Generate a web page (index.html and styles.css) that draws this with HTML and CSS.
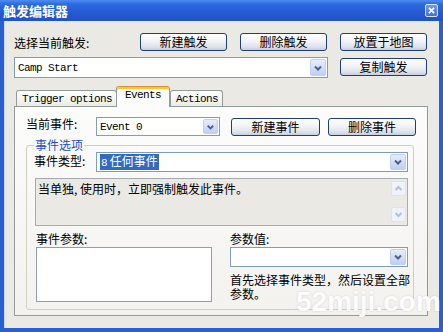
FILE: index.html
```html
<!DOCTYPE html>
<html lang="zh-CN">
<head>
<meta charset="UTF-8">
<title>触发编辑器</title>
<link rel="stylesheet" href="styles.css">
</head>
<body>

<div class="window">
  <!-- TITLE BAR -->
  <div class="titlebar">
    <span class="title">触发编辑器</span>
    <span class="close">
      <svg width="13" height="13" viewBox="0 0 13 13"><path d="M3.5 3.5 L9.5 9.5 M9.5 3.5 L3.5 9.5" stroke="#fff" stroke-width="2"/></svg>
    </span>
  </div>

  <div class="client">
    <!-- TRIGGER ROW -->
    <div class="row trig-row">
      <span class="lbl">选择当前触发:</span>
      <button class="btn">新建触发</button>
      <button class="btn">删除触发</button>
      <button class="btn">放置于地图</button>
    </div>

    <div class="row combo-row">
      <div class="combo trig-combo">
        <span class="combo-text mono">Camp Start</span>
        <span class="drop"><svg width="14" height="14" viewBox="0 0 14 14"><path d="M4 5.5 L7 8.5 L10 5.5" fill="none" stroke="#4d6185" stroke-width="2"/></svg></span>
      </div>
      <button class="btn">复制触发</button>
    </div>

    <!-- TABS -->
    <div class="tabs">
      <div class="tab mono">Trigger options</div>
      <div class="tab active mono">Events</div>
      <div class="tab mono">Actions</div>
    </div>

    <div class="panel">
      <div class="row event-row">
        <span class="lbl event-lbl">当前事件:</span>
        <div class="combo event-combo">
          <span class="combo-text mono">Event 0</span>
          <span class="drop"><svg width="14" height="14" viewBox="0 0 14 14"><path d="M4 5.5 L7 8.5 L10 5.5" fill="none" stroke="#4d6185" stroke-width="2"/></svg></span>
        </div>
        <button class="btn btn-new">新建事件</button>
        <button class="btn btn-del">删除事件</button>
      </div>

      <fieldset class="group">
        <legend>事件选项</legend>

        <div class="row type-row">
          <span class="lbl type-lbl">事件类型:</span>
          <div class="combo type-combo">
            <span class="combo-text"><span class="sel"><span class="mono">8</span>&nbsp;任何事件</span></span>
            <span class="drop"><svg width="14" height="14" viewBox="0 0 14 14"><path d="M4 5.5 L7 8.5 L10 5.5" fill="none" stroke="#4d6185" stroke-width="2"/></svg></span>
          </div>
        </div>

        <div class="desc">
          <div class="desc-text">当单独, 使用时，立即强制触发此事件。</div>
          <div class="scroll">
            <span class="sarrow"><svg width="13" height="13" viewBox="0 0 13 13"><path d="M3.5 8 L6.5 5 L9.5 8" fill="none" stroke="#b3c0da" stroke-width="2"/></svg></span>
            <span class="sarrow"><svg width="13" height="13" viewBox="0 0 13 13"><path d="M3.5 5 L6.5 8 L9.5 5" fill="none" stroke="#b3c0da" stroke-width="2"/></svg></span>
          </div>
        </div>

        <div class="row param-labels">
          <span class="lbl param-lbl">事件参数:</span>
          <span class="lbl">参数值:</span>
        </div>

        <div class="row params">
          <div class="listbox"></div>
          <div class="param-right">
            <div class="combo value-combo">
              <span class="combo-text"></span>
              <span class="drop"><svg width="14" height="14" viewBox="0 0 14 14"><path d="M4 5.5 L7 8.5 L10 5.5" fill="none" stroke="#4d6185" stroke-width="2"/></svg></span>
            </div>
            <p class="hint">首先选择事件类型，然后设置全部<br>参数。</p>
          </div>
        </div>
      </fieldset>
    </div>
  </div>

  <div class="watermark">52miji.com</div>
</div>

</body>
</html>
```

FILE: styles.css
```css
* { box-sizing: border-box; }

body {
  margin: 0;
  font-family: "Noto Sans CJK SC", "Liberation Sans", sans-serif;
  font-size: 12px;
  color: #000;
}

.mono {
  font-family: "Liberation Mono", "Noto Sans CJK SC", monospace;
  font-size: 11px;
  letter-spacing: -0.6px;
}

/* window frame */
.window {
  position: relative;
  width: 443px;
  height: 332px;
  display: flex;
  flex-direction: column;
  background: #2a5fd0;
  overflow: hidden;
}

.titlebar {
  height: 21px;
  display: flex;
  align-items: center;
  justify-content: space-between;
  padding: 0 5px 0 3px;
  background: linear-gradient(#4d8cf0 0%, #2e6ae0 20%, #2459d0 60%, #2153c6 100%);
}
.title { color: #fff; font-weight: bold; font-size: 13px; }
.close {
  width: 13px; height: 13px;
  border: 1px solid #d7e3f9;
  border-radius: 2px;
  background: linear-gradient(#6d9bf0, #3f73dc);
  display: flex; align-items: center; justify-content: center;
}
.close svg { display: block; width: 11px; height: 11px; }

.client {
  flex: 1;
  margin: 0 4px 4px 4px;
  background: #ebe9e3;
  border-left: 1px solid #c9d7f2;
  padding: 12px 11px 0 9px;
}

.row { display: flex; }

/* buttons */
.btn {
  width: 87px;
  height: 18px;
  padding: 0;
  font-family: "Noto Sans CJK SC", sans-serif;
  font-size: 12px;
  line-height: 16px;
  color: #000;
  border: 1px solid #1d3f78;
  border-radius: 3px;
  background: linear-gradient(#ffffff 0%, #f2f3f6 45%, #dde2ec 80%, #c4cde0 100%);
}

.trig-row { align-items: center; height: 18px; gap: 13px; margin-right: 1px; }
.trig-row .lbl { flex: 1; padding-top: 1px; }

.combo-row { margin-top: 6px; gap: 12px; margin-right: 1px; }
.combo-row .btn { margin-top: 1px; }

/* combo boxes */
.combo {
  display: flex;
  align-items: stretch;
  border: 1px solid #7f9db9;
  background: #fff;
  padding: 1px;
}
.combo-text {
  flex: 1;
  display: flex;
  align-items: center;
  padding-left: 2px;
  white-space: nowrap;
}
.drop {
  width: 16px;
  border: 1px solid #bdd0f7;
  border-radius: 2px;
  background: linear-gradient(#e6eefd, #bdcff7);
  display: flex; align-items: center; justify-content: center;
}
.drop svg { display: block; }

.trig-combo { width: 314px; height: 21px; }

/* tabs */
.tabs {
  margin-top: 9px;
  height: 19px;
  display: flex;
  align-items: flex-end;
  padding-left: 2px;
}
.tab {
  height: 16px;
  padding: 0 4px 0 5px;
  line-height: 16px;
  border: 1px solid #919b9c;
  border-bottom: none;
  border-radius: 3px 3px 0 0;
  background: linear-gradient(#ffffff, #ecebe6);
}
.tab.active {
  position: relative;
  z-index: 1;
  height: 21px;
  margin: 0 0 -1px -1px;
  padding: 0 8px;
  line-height: 16px;
  border-top: 1px solid #e68b2c;
  box-shadow: inset 0 2px 0 #ffc83c;
  background: #fcfcfb;
}

.panel {
  height: 210px;
  border: 1px solid #919b9c;
  background: linear-gradient(#fcfcfb, #f3f2ef);
  padding: 10px 11px 5px 11px;
}

.event-row { height: 19px; align-items: flex-start; }
.event-lbl { width: 70px; line-height: 14px; }
.event-combo { width: 124px; height: 19px; }
.event-combo .drop { width: 15px; }
.btn-new { width: 89px; margin: 1px 0 0 11px; }
.btn-del { width: 88px; margin: 1px 0 0 8px; }

/* group box */
.group {
  margin: 3px 2px 0 0;
  padding: 1px 5px 7px 7px;
  border: 1px solid #d0d0bf;
  border-radius: 3px;
  min-width: 0;
}
.group legend {
  padding: 0 1px;
  line-height: 12px;
  color: #1b4fc8;
}

.type-row { height: 20px; }
.type-lbl { width: 62px; line-height: 18px; }
.type-combo { flex: 1; }
.sel {
  background: #316ac5;
  color: #fff;
  padding: 0 1px;
  line-height: 14px;
}

.desc {
  margin: 6px 0 0 1px;
  height: 48px;
  display: flex;
  border: 1px solid #a5acb2;
  background: #ebe9e4;
}
.desc-text { flex: 1; padding: 3px 2px; line-height: 14px; }
.scroll {
  width: 17px;
  padding: 2px 1px 3px 1px;
  display: flex;
  flex-direction: column;
  justify-content: space-between;
}
.sarrow {
  width: 15px; height: 15px;
  border: 1px solid #dbe2f1;
  border-radius: 2px;
  background: #eef2fb;
  display: flex; align-items: center; justify-content: center;
}

.param-labels { margin-top: 6px; line-height: 13px; }
.param-lbl { width: 196px; padding-left: 2px; }

.params { margin-top: 2px; }
.listbox {
  margin-left: 2px;
  width: 176px;
  height: 55px;
  border: 1px solid #8e9fb5;
  background: #fff;
}
.param-right { margin-left: 18px; width: 178px; }
.value-combo { height: 20px; }
.hint {
  margin: 6px 0 0;
  line-height: 14px;
  white-space: nowrap;
}

.watermark {
  position: absolute;
  left: 296px;
  top: 288px;
  font-family: "Liberation Sans", sans-serif;
  font-weight: bold;
  font-size: 28px;
  line-height: 28px;
  color: rgba(255, 255, 255, 0.95);
  text-shadow: 0 0 2px rgba(120, 120, 120, 0.3);
}
```
